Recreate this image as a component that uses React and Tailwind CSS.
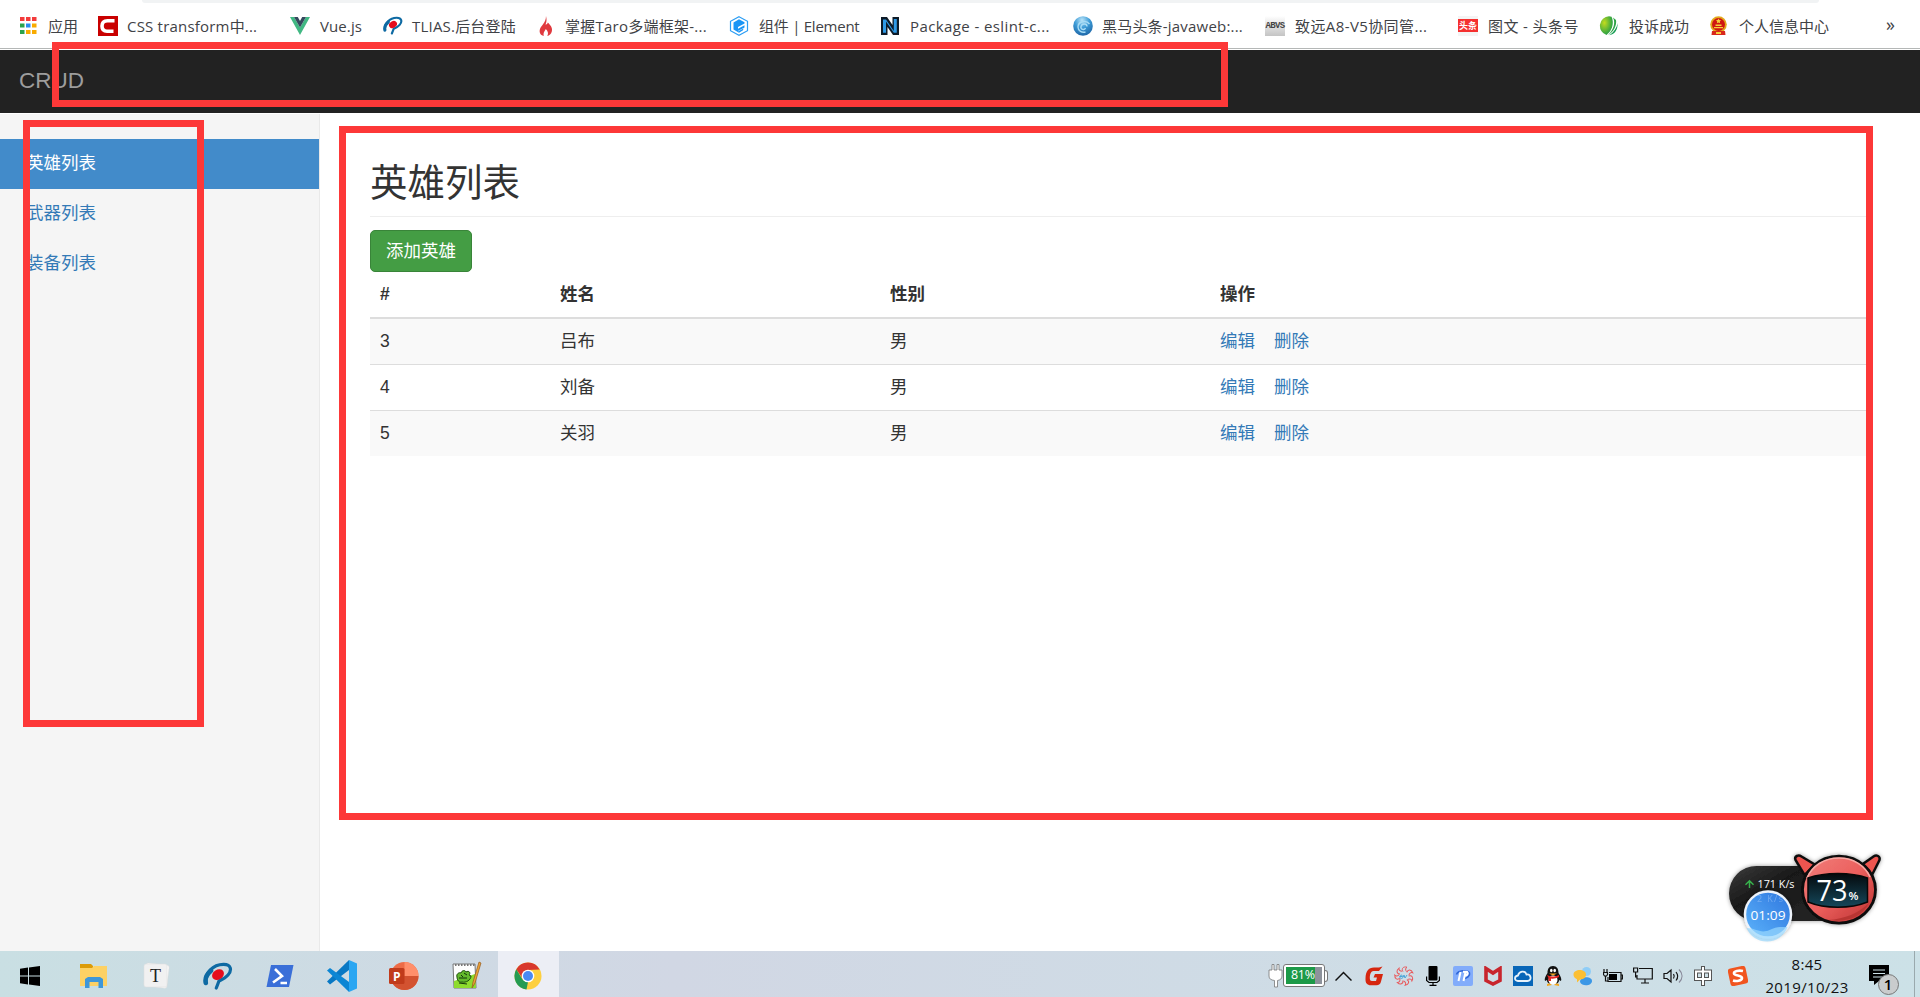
import React from "react";

const UI = "font-['Open_Sans','Noto_Sans_CJK_SC',sans-serif]";

function Peak({ className }) {
  return (
    <svg viewBox="0 0 30 28" className={className} fill="none">
      <path d="M3.200 20C1.500 11 10 2.600 20.500 2.400c8-.1 8.500 6 4.500 10.600-2.500 3-6 4.600-9 6L13.300 26" stroke="#0e6aa3" strokeWidth="3.200" strokeLinecap="round" />
      <path d="M2.800 21c-1.200-5 2-9.500 5.200-12.200" stroke="#0e6aa3" strokeWidth="4.600" strokeLinecap="round" />
      <ellipse cx="15" cy="12.600" rx="6.300" ry="4.900" transform="rotate(-32 15 12.600)" fill="#e60c1c" />
    </svg>
  );
}

const icons = {
  apps: (
    <svg viewBox="0 0 17 17" className="h-[17px] w-[17px]">
      {["#f33b3b", "#f33b3b", "#f33b3b", "#2ba24c", "#2a8cf0", "#f9ab00", "#2ba24c", "#f9ab00", "#f9ab00"].map((c, i) => (
        <rect key={i} x={(i % 3) * 6} y={Math.floor(i / 3) * 6.5} width="4.500" height="4" fill={c} />
      ))}
    </svg>
  ),
  c: (
    <svg viewBox="0 0 20 20" className="h-5 w-5">
      <path d="M0 0h20v20H0z" fill="#c90000" />
      <path d="M16.5 4.8H9.5C5.500 4.800 4 7 4 10s1.500 5.200 5 5.200h6.500" fill="none" stroke="#fff" strokeWidth="3.600" />
    </svg>
  ),
  vue: (
    <svg viewBox="0 0 20 18" className="h-[18px] w-5">
      <path d="M0 0h4l6 10.500L16 0h4L10 18z" fill="#41b883" />
      <path d="M4 0h3.800L10 4l2.200-4H16l-6 10.500z" fill="#35495e" />
    </svg>
  ),
  peak: <Peak className="h-[19px] w-5" />,
  flame: (
    <svg viewBox="0 0 14 20" className="h-5 w-3.5">
      <path d="M7 0c1 4 .5 6-.5 8.500 1 0 2-.5 2.300-2 3 3 5 5.500 4 9-.6 2.500-2.500 4-4.500 4.500 1.500-3 .5-5-1.500-7-1 2-2.800 3.500-2 7C1 19 0 16 1 13c1-3.500 6-6 6-13z" fill="#e0393e" />
    </svg>
  ),
  element: (
    <svg viewBox="0 0 20 20" className="h-5 w-5">
      <path d="M10 .7l8.500 4.600v9.400L10 19.300l-8.500-4.600V5.300z" fill="#fff" stroke="#2b9df4" strokeWidth="1.200" />
      <path d="M10 3.200l5.500 3v1.300L9 11v1.800l6.500-3.600v2.200L9 15v.6l5.500-3-.5 1.700-4 2.400-5.500-3.200V6.400z" fill="#1b95f5" />
    </svg>
  ),
  npkg: (
    <svg viewBox="0 0 18 18" className="h-[18px] w-[18px]">
      <path d="M0 0h6l5.500 8V0H18v18h-6L6.500 10v8H0z" fill="#0d1b28" />
      <path d="M2 2.500h3l7.800 11.500V2h3v13.800h-3L5 4.500v11.300H2z" fill="#2f9ae6" />
    </svg>
  ),
  ball: (
    <svg viewBox="0 0 20 20" className="h-5 w-5">
      <defs>
        <radialGradient id="ball" cx=".45" cy=".2" r=".85">
          <stop offset="0" stopColor="#b8e3f8" />
          <stop offset=".45" stopColor="#3d9bd6" />
          <stop offset="1" stopColor="#1c62a3" />
        </radialGradient>
      </defs>
      <circle cx="10" cy="10" r="9.800" fill="url(#ball)" />
      <path d="M14 10.500c0-3-5-3.500-6 0-.8 3 3.500 4 4.500 1.500M16.500 8C13 3.500 5 5.500 5 11c0 4 4 6 7.500 5" fill="none" stroke="#a8dcf5" strokeWidth="1.400" />
    </svg>
  ),
  rbvs: (
    <div className="flex h-5 w-5 items-center justify-center bg-linear-to-b from-white to-[#c4c4c4] pt-0.5">
      <span className="font-['Liberation_Mono',monospace] text-[9px] font-bold leading-none tracking-[-0.7px] text-[#444]">ABVS</span>
    </div>
  ),
  toutiao: (
    <div className="flex h-5 w-5 items-center bg-[#f4f4f4]">
      <div className="flex h-[13px] w-5 items-center justify-center bg-[#f5302f] font-['Noto_Sans_CJK_SC',sans-serif] text-[9px] font-bold leading-none text-white">头条</div>
    </div>
  ),
  leaf: (
    <svg viewBox="0 0 20 20" className="h-5 w-5">
      <defs>
        <radialGradient id="leaf" cx=".35" cy=".35" r=".8">
          <stop offset="0" stopColor="#c4db1f" />
          <stop offset=".6" stopColor="#4fb03a" />
          <stop offset="1" stopColor="#0d9150" />
        </radialGradient>
      </defs>
      <path d="M10 .3A9.600 9.600 0 007.500 19C14 14 15 6 12.500.8z" fill="url(#leaf)" />
      <path d="M14 1.500c3 6 0 13-5 17.500C14.500 16 18 9.500 17 4z" fill="#2fa348" />
      <path d="M18.500 7c-.5 5-4 9.500-8.500 12.300 5.500-.8 9-5.300 8.500-12.300z" fill="#119a50" />
    </svg>
  ),
  emblem: (
    <svg viewBox="0 0 19 20" className="h-5 w-[19px]">
      <circle cx="9.500" cy="8.500" r="8.300" fill="#e3a81c" />
      <circle cx="9.500" cy="8.500" r="6.500" fill="#cf1712" />
      <path d="M3 15h13l.5 4H2.500z" fill="#d8271c" />
      <path d="M9.500 2.500l.8 1.600 1.700.2-1.200 1.200.3 1.700-1.600-.8-1.600.8.3-1.700L7 4.300l1.700-.2zM5 11h9v1.200H5zM6.500 8.500h6V10h-6zM7 16h5v2H7z" fill="#f6cf3b" />
    </svg>
  ),
};

const bookmarks = [
  ["apps", "应用", "w-[78px]", "w-[28px]", "tracking-[0px]"],
  ["c", "CSS transform中...", "w-[192px]", "w-[29px]", "tracking-[0.200px]"],
  ["vue", "Vue.js", "w-[93px]", "w-[30px]", "tracking-[0.100px]"],
  ["peak", "TLIAS.后台登陆", "w-[156px]", "w-[29px]", "tracking-[0.200px]"],
  ["flame", "掌握Taro多端框架-...", "w-[190px]", "w-[26px]", "tracking-[0.250px]"],
  ["element", "组件 | Element", "w-[152px]", "w-[30px]", "tracking-[-0.250px]"],
  ["npkg", "Package - eslint-c...", "w-[192px]", "w-[29px]", "tracking-[0.400px]"],
  ["ball", "黑马头条-javaweb:...", "w-[192px]", "w-[29px]", "tracking-[0.200px]"],
  ["rbvs", "致远A8-V5协同管...", "w-[193px]", "w-[30px]", "tracking-[0.400px]"],
  ["toutiao", "图文 - 头条号", "w-[141px]", "w-[30px]", "tracking-[0.400px]"],
  ["leaf", "投诉成功", "w-[110px]", "w-[30px]", "tracking-[0px]"],
  ["emblem", "个人信息中心", "w-[177px]", "w-[30px]", "tracking-[0px]"],
];

function Bookmarks() {
  return (
    <div className={`flex h-[50px] flex-col bg-white ${UI}`}>
      <div className="ml-[142px] h-[3px] w-[1677px] rounded-b-md bg-[#f1f3f4]" />
      <div className="flex h-[45px] items-center pl-5 text-[15px] text-[#3f4246]">
        {bookmarks.map(([icon, label, w, iw, tr]) => (
          <div key={icon} className={`flex shrink-0 items-center whitespace-nowrap ${w}`}>
            <span className={`shrink-0 ${iw}`}>{icons[icon]}</span>
            <span className={`pt-px ${tr}`}>{label}</span>
          </div>
        ))}
        <span className="pb-1 text-lg">»</span>
      </div>
      <div className="h-px bg-[#b4b7b6]" />
    </div>
  );
}

const heroes = [
  { id: 3, name: "吕布", sex: "男" },
  { id: 4, name: "刘备", sex: "男" },
  { id: 5, name: "关羽", sex: "男" },
];

function Main() {
  return (
    <main className="ml-[50px] w-[1500px] text-[#333]">
      <h1 className="mt-[41px] h-[63px] border-b border-[#eee] pt-[9px] text-[37.500px] leading-[41px]">英雄列表</h1>
      <button className="mt-[13px] flex h-[42px] w-[102px] items-center justify-center rounded-[5px] border border-[#398439] bg-[#449d44] text-[17.500px] text-white">添加英雄</button>
      <table className="w-full table-fixed border-collapse text-left text-[17.500px] leading-[25px]">
        <colgroup>
          <col className="w-[180px]" />
          <col className="w-[330px]" />
          <col className="w-[330px]" />
          <col className="w-[660px]" />
        </colgroup>
        <thead>
          <tr className="h-[46px] border-b-2 border-[#ddd]">
            {["#", "姓名", "性别", "操作"].map((h) => (
              <th key={h} className="px-2.5 py-0 font-bold">{h}</th>
            ))}
          </tr>
        </thead>
        <tbody>
          {heroes.map((h) => (
            <tr key={h.id} className="h-[46px] border-b border-[#ddd] odd:bg-[#f9f9f9] last:border-b-0">
              <td className="px-2.5 py-0">{h.id}</td>
              <td className="px-2.5 py-0">{h.name}</td>
              <td className="px-2.5 py-0">{h.sex}</td>
              <td className="px-2.5 py-0">
                <div className="flex gap-[19px] text-[#337ab7]">
                  <a>编辑</a>
                  <a>删除</a>
                </div>
              </td>
            </tr>
          ))}
        </tbody>
      </table>
    </main>
  );
}

const apps = [
  <svg viewBox="0 0 20 20" className="h-5 w-5">
    <path d="M0 2.800L8 1.600v8H0zM9 1.500L20 0v9.500H9zM0 10.500h8v8L0 17.300zM9 10.500h11V20L9 18.500z" />
  </svg>,
  <svg viewBox="0 0 28 26" className="h-[26px] w-7">
    <path d="M0 1h11l2 2v5H0z" fill="#dc9b08" />
    <path d="M0 5h12l2-2h13v20H0z" fill="#fdd164" />
    <path d="M5 25V16l3-2h12l3 2v9h-4.500v-6h-9v6z" fill="#3e97d8" />
  </svg>,
  <svg viewBox="0 0 28 28" className="h-7 w-7">
    <rect x="3" y="2" width="23" height="23" rx="2" transform="rotate(7 14 14)" fill="#fafafa" stroke="#ddd" strokeWidth=".5" />
    <rect x="2" y="2" width="23" height="23" rx="2" fill="#f1f1f1" stroke="#dcdcdc" strokeWidth=".5" />
    <text x="13.500" y="20" textAnchor="middle" className="font-['Liberation_Serif',serif] text-[18px]" fill="#222">T</text>
  </svg>,
  <Peak className="h-7 w-[30px]" />,
  <svg viewBox="0 0 28 22" className="h-[22px] w-7">
    <path d="M5 0h22.500L23 22H.5z" fill="#3a6fd8" />
    <path d="M9 4l7 7-9 6.500M14.500 18h6.500" fill="none" stroke="#fff" strokeWidth="2.600" />
  </svg>,
  <svg viewBox="0 0 30 32" className="h-8 w-[30px]">
    <path d="M22 0L2 19.500l-2 2 3 3L22 10z" fill="#0878c4" />
    <path d="M3 8l19 14v10L0 10.500z" fill="#0c86d4" />
    <path d="M22 0l8 3.500v25L22 32z" fill="#2aa6f2" />
  </svg>,
  <svg viewBox="0 0 30 30" className="h-[30px] w-[30px]">
    <circle cx="15.500" cy="15" r="14" fill="#ed6c47" />
    <path d="M15.500 1a14 14 0 0114 14h-14z" fill="#ff8f6b" />
    <path d="M1.500 15h28a14 14 0 01-28 0z" fill="#d35230" />
    <rect y="7" width="15.500" height="16" rx="1.500" fill="#c13b1b" />
    <text x="7.700" y="19.500" textAnchor="middle" className="font-['Open_Sans',sans-serif] text-[12px] font-bold" fill="#fff">P</text>
  </svg>,
  <svg viewBox="0 0 30 30" className="h-[30px] w-[30px]">
    <path d="M1 3h22l1 24H2z" fill="#fdfdfd" stroke="#777" />
    <path d="M2 20l21-7 1 14H2z" fill="#8edc2e" />
    <path d="M3 4h20" stroke="#777" strokeWidth="2" strokeDasharray="1.500 1.500" />
    <path d="M5 16c-1-3 2-5 4-4 1-3 4-3 5-1 3-2 5 1 3 3l2 1c0 4-5 7-9 6-3 1-5-2-5-5z" fill="#63b92c" stroke="#1c4d0c" />
    <path d="M7 17h8M12 12l3 2M7 22l8 1M9 14l2 2" stroke="#12350a" />
    <path d="M27 1l2 1-6 20-3 5 1-6z" fill="#eea336" stroke="#93591c" strokeWidth=".7" />
  </svg>,
  <svg viewBox="0 0 28 28" className="h-7 w-7">
    <circle cx="14" cy="14" r="13.500" fill="#fdcf3f" />
    <path d="M2.300 7.200A13.500 13.500 0 0125.700 7.500L14 8 9 17z" fill="#d8382d" />
    <path d="M2.300 7.200L8.500 17.500 14 20l-1.500 7.500A13.500 13.500 0 012.300 7.200z" fill="#249b52" />
    <circle cx="14" cy="14" r="6.300" fill="#fff" />
    <circle cx="14" cy="14" r="5" fill="#4a8af4" />
  </svg>,
];

const slots = [
  "w-[62px] pr-0.5",
  "w-[62px] pl-0.5",
  "w-[62px] pl-px",
  "w-[63px]",
  "w-[62px]",
  "w-[62px]",
  "w-[62px]",
  "w-[63px]",
  "w-[61px] bg-[#eceef5] pr-0.5",
];

const tray = [
  ["w-[16px]", "plug",
    <svg viewBox="0 0 15 24" className="h-6 w-[15px]">
      <path d="M4 .5h2V6h3V.5h2V6h3v6c0 3-2 4-4.500 4.500V23h-3v-6.500C3 16 1 15 1 12V6h3z" fill="#fff" stroke="#777" strokeWidth=".8" />
    </svg>],
  ["w-[51px]", "battery",
    <div className="-ml-px flex items-center">
      <div className="flex h-[23px] w-[42px] items-center rounded-[3px] border border-[#777] bg-white p-[2px]">
        <div className="flex h-[17px] w-full items-center bg-linear-to-r from-[#1c9a48] from-80% to-[#8d929b] to-80% pl-[5px] text-[12.500px] leading-none tracking-[-0.3px] text-white">81%</div>
      </div>
      <div className="h-3 w-[3px] rounded-r-sm border border-l-0 border-[#777] bg-white" />
    </div>],
  ["w-[30px]", "more",
    <svg viewBox="0 0 17 10" className="h-2.5 w-[17px]">
      <path d="M.5 9.500l8-8 8 8" fill="none" stroke="#111" strokeWidth="1.500" />
    </svg>],
  ["w-[29px]", "g",
    <svg viewBox="0 0 18 20" className="h-5 w-[18px]">
      <path d="M17.500.5L14 5H8.500C6 5 5 8 4.800 11.500c-.1 2.500.5 3.500 2.200 3.500h4l1-3.500H8.500L10 8h8l-2 7.500c-.6 2.500-2 3.800-4.500 3.800H6C2 19.300.3 17 .5 12.500.8 5 3.500 1.500 9 1.500h5z" fill="#d6260f" />
    </svg>],
  ["w-[32px]", "ev",
    <svg viewBox="0 0 20 20" className="h-5 w-5">
      <g fill="none" stroke="#e8595c" strokeWidth="1">
        {[0, 51, 103, 154, 206, 257, 309].map((a) => (
          <path key={a} d="M9 5.500C7 2.500 9.500.2 13 1.200c-1.500.8-2 2.500-.5 4.500" transform={`rotate(${a} 10 10)`} />
        ))}
      </g>
      <path d="M5.500 10.500h3c0-2-3-2-2.500 1 .5 1.500 2 1 3 0l1-2.500 1 3 2-3" fill="none" stroke="#4aa5d8" />
    </svg>],
  ["w-[27px]", "mic",
    <svg viewBox="0 0 14 20" className="h-5 w-3.5">
      <rect x="2.500" width="9" height="14.500" rx="1" />
      <path d="M.6 10.500v4L3 16.500h8l2.400-2v-4M7 16.500v3M3.500 19.400h7" fill="none" stroke="#000" strokeWidth="1.200" />
    </svg>],
  ["w-[31px]", "h",
    <svg viewBox="0 0 20 20" className="h-5 w-5">
      <rect width="20" height="20" rx="2" fill="#82acfb" />
      <path d="M3.500 8.500C5 4 15 3.500 16.500 7c.8 3-2.500 5-5 5.500" fill="none" stroke="#2f66d8" strokeWidth="1.600" />
      <path d="M7.500 6L5.500 15M12.500 6l-2 9M10 5.800h3.500c2 .2 1.500 3.700-1.500 3.900" fill="none" stroke="#fff" strokeWidth="2" />
    </svg>],
  ["w-[29px]", "m",
    <svg viewBox="0 0 18 20" className="h-5 w-[18px]">
      <path d="M2 2.500L9 7l7-4.500v12L9 18l-7-3.500z" fill="none" stroke="#c8252d" strokeWidth="3.600" />
    </svg>],
  ["w-[31px]", "cloud",
    <svg viewBox="0 0 20 20" className="h-5 w-5">
      <path d="M0 0h20v20H0z" fill="#0866b8" />
      <path d="M5 15c-4 0-4-5 0-5.500C6 5 12 4 13.500 8.500c5-.5 5.500 6.500 1 6.500z" fill="none" stroke="#e6f1fa" strokeWidth="1.800" />
    </svg>],
  ["w-[29px]", "qq",
    <svg viewBox="0 0 18 20" className="h-5 w-[18px]">
      <path d="M9 0c4 0 5.500 3 5.500 7 2 3 3.500 6 2.500 8l-2-1c0 3-2 4-6 4s-6-1-6-4l-2 1c-1-2 .5-5 2.500-8C3.500 3 5 0 9 0z" fill="#111" />
      <ellipse cx="9" cy="14" rx="4.500" ry="4.500" fill="#fff" />
      <ellipse cx="7.300" cy="4.500" rx="1.300" ry="1.800" fill="#fff" />
      <ellipse cx="10.700" cy="4.500" rx="1.300" ry="1.800" fill="#fff" />
      <path d="M5 7.500h8L9 9.500zM3 18.500c1-2 4-1 5 .5l-5 1zM15 18.500c-1-2-4-1-5 .5l5 1z" fill="#f6a71c" />
      <path d="M3 9c4 2 8 2 12 0v2c-3 1.500-6 2-8 1.500V15H4.500v-3z" fill="#e52421" />
    </svg>],
  ["w-[30px]", "chat",
    <svg viewBox="0 0 20 20" className="h-5 w-5">
      <circle cx="13.500" cy="5.500" r="4.500" fill="#8fcdf7" />
      <path d="M7 16c0-6 12-6 12-1 0 5-10 6-12 1z" fill="#3b97e6" />
      <path d="M.5 8.500c0-6 12.500-6 12.500 0 0 4-4 5-6 5l-3 3v-3.300C1.500 12 .5 10.500.5 8.500z" fill="#fbbf33" />
    </svg>],
  ["w-[30px]", "power",
    <svg viewBox="0 0 20 14" className="h-3.5 w-5">
      <path d="M6 3.500h12v9H5V8M18.500 6h1v4h-1M1 0v3M4 0v3M.5 3.500h4v2l-1 1.500h-2L.5 5.500zM2.500 7v5H5" fill="none" stroke="#111" strokeWidth="1.200" />
      <path d="M6 5h8v6H6z" />
    </svg>],
  ["w-[30px]", "net",
    <svg viewBox="0 0 20 17" className="h-[17px] w-5">
      <path d="M6 1.500h13.300V12H4V8M12 12v4M8 16h8M.6 1h4v4h-4zM2.600 5v5H4" fill="none" stroke="#111" strokeWidth="1.200" />
    </svg>],
  ["w-[31px]", "sound",
    <svg viewBox="0 0 20 18" className="h-[18px] w-5">
      <path d="M1 6.500h3L8 3v12l-4-3.500H1zM10.500 7c1 1.500 1 3 0 4.500M13 5c2 2.500 2 6 0 8.500" fill="none" stroke="#111" strokeWidth="1.200" />
      <path d="M16 2.500c4 4 4 9 0 13" fill="none" stroke="#889" strokeWidth="1.200" />
    </svg>],
  ["w-[34px]", "ime",
    <svg viewBox="0 0 18 20" className="h-5 w-[18px]">
      <path d="M2 5.500h14v7.500H2zM9 0v20" fill="none" stroke="#555" strokeWidth="4" />
      <path d="M2 5.500h14v7.500H2zM9 1v18" fill="none" stroke="#fff" strokeWidth="2" />
    </svg>],
  ["w-[31px]", "sogou",
    <svg viewBox="0 0 20 20" className="h-5 w-5">
      <rect x="1" y="1" width="18" height="18" rx="3" transform="rotate(-12 10 10)" fill="#f1551f" />
      <path d="M15 5C11 4 5.500 5 6 7.500s8 1.500 8 4.500-6 3.500-9 2.500" fill="none" stroke="#fff" strokeWidth="2.600" />
    </svg>],
];

function Taskbar() {
  return (
    <footer className={`flex h-[46px] shrink-0 items-center bg-linear-to-r from-[#c9dfe3] via-[#d1d7e4] via-35% to-[#cce1e7] ${UI}`}>
      {apps.map((icon, i) => (
        <div key={i} className={`flex h-full shrink-0 items-center justify-center pt-[3px] ${slots[i]}`}>{icon}</div>
      ))}
      <div className="grow" />
      <div className="flex w-[491px] shrink-0 items-center pt-[3px]">
        {tray.map(([w, name, icon]) => (
          <div key={name} className={`shrink-0 ${w}`}>{icon}</div>
        ))}
      </div>
      <div className="flex w-[96px] shrink-0 flex-col items-center pt-[3px] text-[15px] leading-[23px] tracking-[0.350px] text-[#111]">
        <span>8:45</span>
        <span>2019/10/23</span>
      </div>
      <div className="flex w-[59px] shrink-0 justify-center pt-0.5">
        <div className="relative pr-3">
          <svg viewBox="0 0 20 20" className="h-5 w-5">
            <path d="M0 0h20v16H10l-5 4v-4H0z" />
            <path d="M4 5h12M4 8.500h12M4 12h9" stroke="#cce1e7" />
          </svg>
          <div className="absolute top-[9px] left-[9px] flex h-[21px] w-[21px] items-center justify-center rounded-full border border-[#777] bg-[#c9cccd] text-[15px] font-semibold text-black">1</div>
        </div>
      </div>
      <div className="h-full w-[6px] shrink-0 border-l border-[#9aa9ad]" />
    </footer>
  );
}

function Widget() {
  return (
    <svg viewBox="0 0 190 110" className="absolute top-[840px] left-[1710px] h-[110px] w-[190px]">
      <defs>
        <linearGradient id="pill" x1="0" y1="0" x2="1" y2="1">
          <stop offset="0" stopColor="#3c3c3c" />
          <stop offset=".4" stopColor="#191919" />
          <stop offset="1" stopColor="#262626" />
        </linearGradient>
        <linearGradient id="screen" x1="0" y1="0" x2="0" y2="1">
          <stop offset="0" stopColor="#04090c" />
          <stop offset="1" stopColor="#15485b" />
        </linearGradient>
        <linearGradient id="face" x1="0" y1="0" x2="1" y2="1">
          <stop offset="0" stopColor="#f0807c" />
          <stop offset=".5" stopColor="#ec5f5d" />
          <stop offset="1" stopColor="#b9302f" />
        </linearGradient>
        <linearGradient id="clock" x1="1" y1="0" x2="0" y2="1">
          <stop offset="0" stopColor="#2d75de" />
          <stop offset="1" stopColor="#5db4fb" />
        </linearGradient>
        <filter id="soft" x="-20%" y="-20%" width="140%" height="140%">
          <feDropShadow dx="0" dy="0" stdDeviation="2" floodColor="#000" floodOpacity=".4" />
        </filter>
      </defs>
      <g filter="url(#soft)">
        <path d="M46.500 26h70v55h-70a27.500 27.500 0 010-55z" fill="url(#pill)" />
        <path d="M94.500 35L85.500 20c-1.500-4 3-5.500 6-3.500l14 8.500zM162 35l7.500-15c1-4-3-5.500-6-3.500l-12 8.500z" fill="#ee5550" stroke="#111" strokeWidth="2.500" />
        <ellipse cx="129" cy="49.700" rx="36.500" ry="33.500" fill="url(#face)" stroke="#0b0b0b" strokeWidth="2.800" />
      </g>
      <path d="M97 38C102 26 114 18 129 18S155 26 160 37" fill="none" stroke="#f7aaa5" strokeWidth="1.500" />
      <path d="M118 80c17-1 31-7 41-17-7 14-22 20-41 17z" fill="#b83532" />
      <path d="M98 38c17-6 43-6 59.500 0v24c-17 7-42.500 7-59.500 0z" fill="url(#screen)" stroke="#080808" strokeWidth="1.500" />
      <text x="106.500" y="61" className="font-['Open_Sans',sans-serif] text-[29px]" fill="#fff" textLength="31" lengthAdjust="spacingAndGlyphs">73</text>
      <text x="138.500" y="60" className="font-['Open_Sans',sans-serif] text-[11.500px] font-semibold" fill="#fff">%</text>
      <path d="M39.500 48V41M35.500 44.800l4-4 4 4" fill="none" stroke="#38b34d" strokeWidth="1.500" />
      <text x="47.500" y="48" className="font-['Open_Sans',sans-serif] text-[11px]" fill="#fff" textLength="37" lengthAdjust="spacingAndGlyphs">171 K/s</text>
      <circle cx="58" cy="74.500" r="23" fill="url(#clock)" stroke="#eef3fa" strokeWidth="2.400" filter="url(#soft)" />
      <path d="M36.500 88c9 0 14 6 23 2 8-4 12-3 18-3a22 22 0 01-41 1z" fill="#9ad8fe" opacity=".7" />
      <text x="47" y="62" className="font-['Open_Sans',sans-serif] text-[9px]" fill="#8fbdf5" opacity=".65" textLength="26">2 K/s</text>
      <text x="40.500" y="80" className="font-['Open_Sans',sans-serif] text-[13px]" fill="#fff" textLength="35" lengthAdjust="spacingAndGlyphs">01:09</text>
    </svg>
  );
}

export default function App() {
  return (
    <div className="relative flex h-[997px] w-[1920px] flex-col overflow-hidden bg-white font-['Liberation_Sans','Noto_Sans_CJK_SC',sans-serif]">
      <Bookmarks />
      <nav className="flex h-[63px] shrink-0 items-center bg-[#222] pb-0.5 pl-[19px] text-[22.500px] text-[#9d9d9d]">CRUD</nav>
      <div className="flex grow">
        <aside className="mt-px w-[320px] border-r border-[#e9e9e9] bg-[#f5f5f5] pt-[25px] text-[17.500px] text-[#337ab7]">
          <a className="flex h-[50px] items-center bg-[#428bca] pb-0.5 pl-[26px] text-white">英雄列表</a>
          <a className="flex h-[50px] items-center pb-0.5 pl-[26px]">武器列表</a>
          <a className="flex h-[50px] items-center pb-0.5 pl-[26px]">装备列表</a>
        </aside>
        <Main />
      </div>
      <Taskbar />
      <div className="absolute top-[42px] left-[52px] h-[65px] w-[1176px] border-[7px] border-[#fd3838]" />
      <div className="absolute top-[120px] left-[23px] h-[607px] w-[181px] border-[7px] border-[#fd3838]" />
      <div className="absolute top-[126px] left-[339px] h-[694px] w-[1534px] border-[7px] border-[#fd3838]" />
      <Widget />
    </div>
  );
}
